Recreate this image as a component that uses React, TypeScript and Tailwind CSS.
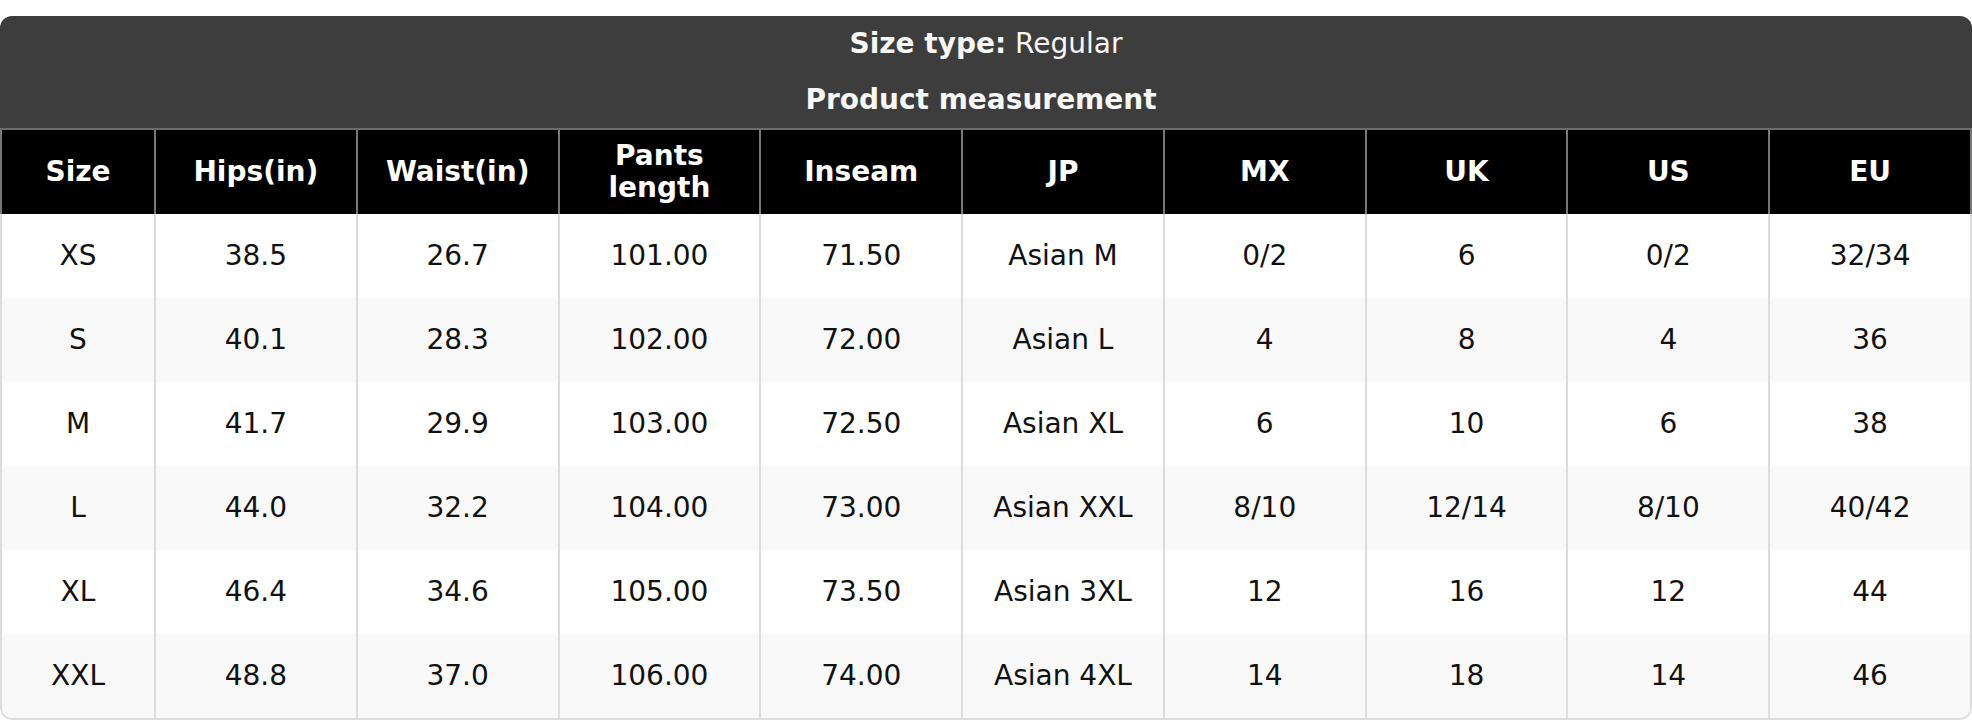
const headers = ['Size', 'Hips(in)', 'Waist(in)', 'Pants length', 'Inseam', 'JP', 'MX', 'UK', 'US', 'EU'];

const rows: string[][] = [
  ['XS', '38.5', '26.7', '101.00', '71.50', 'Asian M', '0/2', '6', '0/2', '32/34'],
  ['S', '40.1', '28.3', '102.00', '72.00', 'Asian L', '4', '8', '4', '36'],
  ['M', '41.7', '29.9', '103.00', '72.50', 'Asian XL', '6', '10', '6', '38'],
  ['L', '44.0', '32.2', '104.00', '73.00', 'Asian XXL', '8/10', '12/14', '8/10', '40/42'],
  ['XL', '46.4', '34.6', '105.00', '73.50', 'Asian 3XL', '12', '16', '12', '44'],
  ['XXL', '48.8', '37.0', '106.00', '74.00', 'Asian 4XL', '14', '18', '14', '46'],
];

export default function App() {
  return (
    <div className="w-[1972px] bg-white pt-[16px] font-['DejaVu_Sans',sans-serif] text-[28px] leading-[32px]">
      <div className="rounded-[12px] overflow-hidden">
        {/* Title block */}
        <div className="bg-[#3d3d3d] text-[#f7f7f7] flex flex-col items-center pt-[12px] pb-[12px] gap-[24px] border-b-2 border-[#6c6c6c]">
          <div>
            <span className="font-bold">Size type:</span> Regular
          </div>
          <div className="font-bold pr-[10px]">Product measurement</div>
        </div>

        {/* Column headers */}
        <div className="grid grid-cols-[152px_repeat(9,1fr)] bg-black border-x-2 border-[#777]">
          {headers.map((h, i) => (
            <div
              key={h}
              className={`h-[84px] flex items-center justify-center text-center font-bold text-white px-2 ${
                i > 0 ? 'border-l-2 border-[#777]' : ''
              }`}
            >
              {h === 'Pants length' ? (
                <span>
                  Pants
                  <br />
                  length
                </span>
              ) : (
                h
              )}
            </div>
          ))}
        </div>

        {/* Data */}
        <div className="border-x-2 border-b-2 border-[#dcdcdc] rounded-b-[12px] overflow-hidden">
          {rows.map((r, ri) => (
            <div
              key={r[0]}
              className={`grid grid-cols-[152px_repeat(9,1fr)] ${ri % 2 === 1 ? 'bg-[#f8f8f8]' : 'bg-white'}`}
            >
              {r.map((c, ci) => (
                <div
                  key={ci}
                  className={`h-[84px] flex items-center justify-center text-[#111] ${
                    ci > 0 ? 'border-l-2 border-[#dcdcdc]' : ''
                  }`}
                >
                  {c}
                </div>
              ))}
            </div>
          ))}
        </div>
      </div>
    </div>
  );
}
